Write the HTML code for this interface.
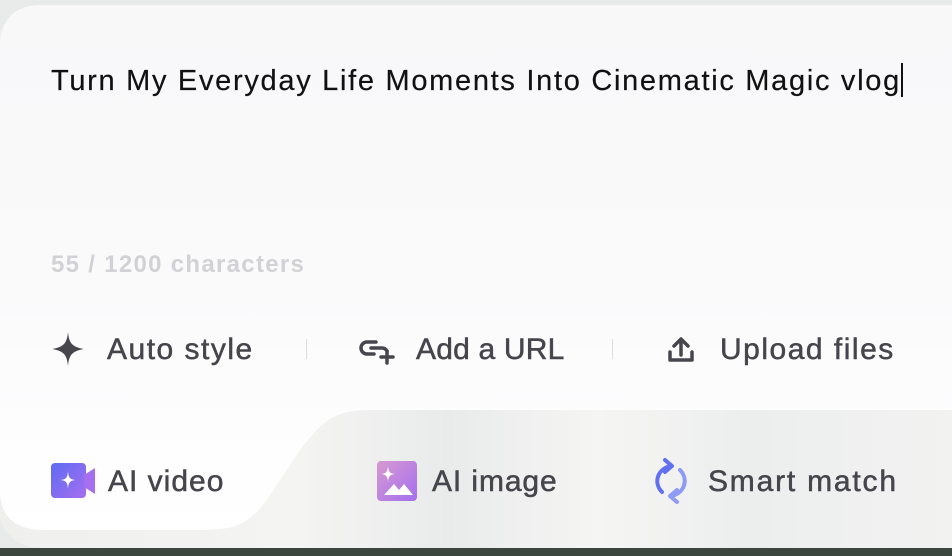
<!DOCTYPE html>
<html><head><style>
html,body{margin:0;width:952px;height:556px;overflow:hidden;background:#e9ebea;font-family:"Liberation Sans",sans-serif}
.bottom{position:absolute;left:0;top:548px;width:952px;height:8px;background:#3b463f}
.outer{position:absolute;left:-2px;top:5px;width:1000px;height:543px;border-radius:42px;background:linear-gradient(90deg,#efefed,#f4f4f2 30%,#e9ebeb 45%,#f5f5f3 60%,#eceeee 75%,#f3f3f1);overflow:hidden}
svg{position:absolute;left:0;top:0}
.t{position:absolute;white-space:nowrap;color:#47454c;font-size:30px;letter-spacing:1.5px;-webkit-text-stroke:0.5px #47454c}
</style></head><body>
<div class="bottom"></div>
<div class="outer"></div>
<svg width="952" height="556">
<defs><linearGradient id="g" x1="0" y1="0" x2="0" y2="1">
<stop offset="0" stop-color="#f8f8f9"/><stop offset="0.55" stop-color="#fafafb"/><stop offset="0.7" stop-color="#fcfcfd"/><stop offset="1" stop-color="#ffffff"/></linearGradient></defs>
<path d="M0,48 Q0,5 42,5 L952,5 L952,410 L370,410 C330,410 320,425 300,450 L270,495 C250,525 235,530 200,530 L45,530 Q0,530 0,490 Z" fill="url(#g)"/>
</svg>
<div class="t" style="left:51px;top:63px;color:#111;font-size:29px;letter-spacing:1.7px;-webkit-text-stroke:0.2px #111">Turn My Everyday Life Moments Into Cinematic Magic vlog<span style="display:inline-block;width:2px;height:34px;background:#111;vertical-align:-7px;margin-left:0"></span></div>
<div class="t" style="left:51px;top:251px;color:#d2d2d6;font-size:24px;letter-spacing:1.3px;font-weight:bold;-webkit-text-stroke:0">55 / 1200 characters</div>

<svg width="40" height="40" style="left:50px;top:330px"><path d="M18,2 C19,13 22,17 34,19 C22,21 19,25 18,36 C17,25 14,21 2,19 C14,17 17,13 18,2Z" fill="#48464d"/></svg>
<div class="t" style="left:107px;top:333px">Auto style</div>
<div style="position:absolute;left:306px;top:339px;width:1px;height:20px;background:#ddd"></div>
<svg width="40" height="30" style="left:358px;top:337px" fill="none" stroke="#48464d" stroke-width="3.5" stroke-linecap="round"><path d="M18,5 H9 a6,6 0 0 0 0,12 H16"/><path d="M13,11 H24 a6,6 0 0 1 5,3"/><path d="M29,14 V26 M23,20 H35"/></svg>
<div class="t" style="left:416px;top:333px;letter-spacing:0.2px">Add a URL</div>
<div style="position:absolute;left:612px;top:339px;width:1px;height:20px;background:#ddd"></div>
<svg width="32" height="32" style="left:666px;top:334px" fill="none" stroke="#48464d" stroke-width="3.5" stroke-linecap="round" stroke-linejoin="round"><path d="M4,18 V26 H26 V18"/><path d="M15,21 V5 M8,12 L15,5 L22,12"/></svg>
<div class="t" style="left:720px;top:333px">Upload files</div>

<svg width="48" height="40" style="left:50px;top:462px"><defs><linearGradient id="v" x1="0" y1="0" x2="1" y2="1"><stop offset="0" stop-color="#5d6cf2"/><stop offset="1" stop-color="#a66ef0"/></linearGradient></defs><rect x="1" y="1" width="35" height="35" rx="4" fill="url(#v)"/><path d="M34,13 L45,6 V32 L34,25Z" fill="#a66ef0"/><path d="M18,9 C18.5,16 20,17.5 26,18 C20,18.5 18.5,20 18,27 C17.5,20 16,18.5 10,18 C16,17.5 17.5,16 18,9Z" fill="#fff"/></svg>
<div class="t" style="left:108px;top:465px;letter-spacing:1px">AI video</div>

<svg width="42" height="42" style="left:377px;top:460px"><defs><linearGradient id="i" x1="0" y1="0" x2="1" y2="1"><stop offset="0" stop-color="#d699d0"/><stop offset="1" stop-color="#a56ff0"/></linearGradient></defs><rect x="0" y="1" width="40" height="40" rx="4" fill="url(#i)"/><path d="M11,6 C11.5,12 13,13.5 18,14 C13,14.5 11.5,16 11,22 C10.5,16 9,14.5 4,14 C9,13.5 10.5,12 11,6Z" fill="#fff"/><path d="M7,35 L17,24 L22,30 L27,24 L36,35Z" fill="#fff"/></svg>
<div class="t" style="left:432px;top:465px;letter-spacing:0.9px">AI image</div>

<svg width="40" height="50" style="left:652px;top:456px" fill="none" stroke-width="4" stroke-linecap="round" stroke-linejoin="round"><path d="M10,36 C2,28 4,14 18,10" stroke="#6070f0"/><path d="M13,4 L20,10 L13,16" stroke="#6070f0"/><path d="M28,14 C36,22 34,36 20,40" stroke="#8d9af6"/><path d="M25,34 L18,40 L25,46" stroke="#8d9af6"/></svg>
<div class="t" style="left:708px;top:465px;letter-spacing:1.8px">Smart match</div>
</body></html>
